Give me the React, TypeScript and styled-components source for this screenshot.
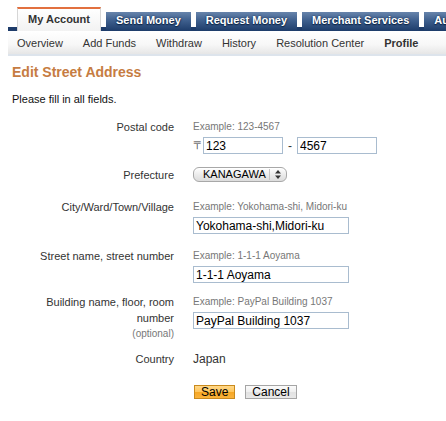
import React from 'react';
import styled, { createGlobalStyle } from 'styled-components';

const GlobalStyle = createGlobalStyle`
  html, body {
    margin: 0;
    padding: 0;
    background: #ffffff;
    font-family: "Liberation Sans", Arial, sans-serif;
    color: #333;
  }
`;

const Header = styled.div`
  margin-left: 8px;
`;

const TabStrip = styled.div`
  display: flex;
  align-items: flex-end;
  gap: 5px;
  height: 31px;
  padding-left: 9px;
  background: linear-gradient(to bottom, transparent 0, transparent 27px, #1e3c6a 27px, #1e3c6a 31px);
  overflow: hidden;
  white-space: nowrap;
`;

const Tab = styled.div<{ $active?: boolean }>`
  flex-shrink: 0;
  box-sizing: border-box;
  font-size: 11px;
  font-weight: bold;
  text-align: center;
  ${p => p.$active ? `
    height: 24px;
    width: 84px;
    line-height: 21px;
    color: #333;
    background: linear-gradient(to bottom, #ffffff, #f2f2f2);
    border-top: 2px solid #e2703f;
    border-left: 1px solid #d6d6d6;
    border-right: 1px solid #d6d6d6;
  ` : `
    height: 19px;
    line-height: 16px;
    padding: 0 10px;
    color: #fff;
    text-shadow: 0 0 2px #0d2547, 0 1px 1px #0d2547;
    background: linear-gradient(to bottom, #6784ab 0%, #3e5f8d 45%, #1d3c6a 100%);
  `}
`;

const SubNav = styled.div`
  display: flex;
  height: 23px;
  align-items: center;
  padding-left: 9px;
  background: linear-gradient(to bottom, #ffffff 0%, #f7f7f7 60%, #e6e6e6 100%);
  border-bottom: 2px solid #dde4ec;
`;

const SubLink = styled.span<{ $current?: boolean }>`
  font-size: 11px;
  color: #333;
  font-weight: ${p => (p.$current ? 'bold' : 'normal')};
  margin-right: 20px;
  white-space: nowrap;
`;

const Content = styled.div`
  padding: 0 12px;
`;

const Title = styled.h1`
  margin: 7px 0 0;
  font-size: 14px;
  line-height: 18px;
  font-weight: bold;
  color: #c67c42;
`;

const Intro = styled.p`
  margin: 10px 0 0;
  font-size: 11px;
  line-height: 16px;
  color: #111;
`;

const Row = styled.div<{ $top: number }>`
  display: grid;
  grid-template-columns: 162px 1fr;
  column-gap: 19px;
  margin-top: ${p => p.$top}px;
`;

const Label = styled.div`
  text-align: right;
  font-size: 11px;
  line-height: 16px;
  color: #333;
`;

const Optional = styled.div`
  font-size: 10px;
  line-height: 15px;
  color: #777;
`;

const Field = styled.div`
  display: flex;
  flex-direction: column;
  align-items: flex-start;
`;

const Example = styled.div`
  font-size: 10px;
  line-height: 16px;
  color: #777;
  margin-bottom: 2px;
`;

const TextInput = styled.input<{ $w: number }>`
  box-sizing: border-box;
  width: ${p => p.$w}px;
  height: 17px;
  margin: 0;
  padding: 0 2px;
  border: 1px solid #a9bccf;
  font-family: "Liberation Sans", Arial, sans-serif;
  font-size: 12px;
  color: #000;
  outline: none;
`;

const PostalLine = styled.div`
  display: flex;
  align-items: center;
  font-size: 12px;
  color: #333;
`;

const PostMark = styled.span`
  width: 10px;
  font-size: 11px;
`;

const Dash = styled.span`
  width: 14px;
  text-align: center;
`;

const SelectBox = styled.div`
  box-sizing: border-box;
  display: flex;
  align-items: center;
  width: 94px;
  height: 15px;
  border: 1px solid #a8a8a8;
  border-radius: 6px;
  background: linear-gradient(to bottom, #ffffff 0%, #ececec 50%, #dcdcdc 100%);
  box-shadow: inset 0 1px 0 #fff;
`;

const SelectText = styled.span`
  flex: 1;
  padding-left: 9px;
  font-size: 11px;
  line-height: 13px;
  color: #000;
`;

const SelectArrows = styled.span`
  display: flex;
  align-items: center;
  justify-content: center;
  width: 16px;
  height: 11px;
  border-left: 1px solid #c4c4c4;
`;

const Plain = styled.div`
  font-size: 12px;
  line-height: 16px;
  color: #333;
`;

const Buttons = styled.div`
  display: flex;
  gap: 10px;
  margin: 18px 0 0 182px;
`;

const Button = styled.button<{ $primary?: boolean }>`
  box-sizing: border-box;
  height: 14px;
  margin: 0;
  padding: 0 6px;
  font-family: "Liberation Sans", Arial, sans-serif;
  font-size: 12px;
  line-height: 12px;
  color: #000;
  cursor: pointer;
  border: 1px solid ${p => (p.$primary ? '#c98a1d' : '#a5a5a5')};
  background: ${p => p.$primary
    ? 'linear-gradient(to bottom, #ffd88a 0%, #ffc55a 50%, #f6a623 51%, #f9b23c 100%)'
    : 'linear-gradient(to bottom, #fbfbfb 0%, #efefef 50%, #e2e2e2 51%, #e8e8e8 100%)'};
`;

const tabs = ['My Account', 'Send Money', 'Request Money', 'Merchant Services', 'Auctions'];
const links = ['Overview', 'Add Funds', 'Withdraw', 'History', 'Resolution Center', 'Profile'];

export default function App() {
  return (
    <>
      <GlobalStyle />
      <Header>
        <TabStrip>
          {tabs.map((t, i) => (
            <Tab key={t} $active={i === 0}>{t}</Tab>
          ))}
        </TabStrip>
        <SubNav>
          {links.map(l => (
            <SubLink key={l} $current={l === 'Profile'}>{l}</SubLink>
          ))}
        </SubNav>
      </Header>

      <Content>
        <Title>Edit Street Address</Title>
        <Intro>Please fill in all fields.</Intro>

        <Row $top={12}>
          <Label>Postal code</Label>
          <Field>
            <Example>Example: 123-4567</Example>
            <PostalLine>
              <PostMark>〒</PostMark>
              <TextInput $w={80} defaultValue="123" />
              <Dash>-</Dash>
              <TextInput $w={80} defaultValue="4567" />
            </PostalLine>
          </Field>
        </Row>

        <Row $top={13}>
          <Label>Prefecture</Label>
          <Field>
            <SelectBox>
              <SelectText>KANAGAWA</SelectText>
              <SelectArrows>
                <svg width="6" height="9" viewBox="0 0 6 9">
                  <path d="M3 0 L6 3.5 L0 3.5 Z" fill="#333" />
                  <path d="M0 5.5 L6 5.5 L3 9 Z" fill="#333" />
                </svg>
              </SelectArrows>
            </SelectBox>
          </Field>
        </Row>

        <Row $top={16}>
          <Label>City/Ward/Town/Village</Label>
          <Field>
            <Example>Example: Yokohama-shi, Midori-ku</Example>
            <TextInput $w={156} defaultValue="Yokohama-shi,Midori-ku" />
          </Field>
        </Row>

        <Row $top={14}>
          <Label>Street name, street number</Label>
          <Field>
            <Example>Example: 1-1-1 Aoyama</Example>
            <TextInput $w={156} defaultValue="1-1-1 Aoyama" />
          </Field>
        </Row>

        <Row $top={11}>
          <Label>
            Building name, floor, room
            <br />
            number
            <Optional>(optional)</Optional>
          </Label>
          <Field>
            <Example>Example: PayPal Building 1037</Example>
            <TextInput $w={156} defaultValue="PayPal Building 1037" />
          </Field>
        </Row>

        <Row $top={10}>
          <Label>Country</Label>
          <Plain>Japan</Plain>
        </Row>

        <Buttons>
          <Button $primary>Save</Button>
          <Button>Cancel</Button>
        </Buttons>
      </Content>
    </>
  );
}
